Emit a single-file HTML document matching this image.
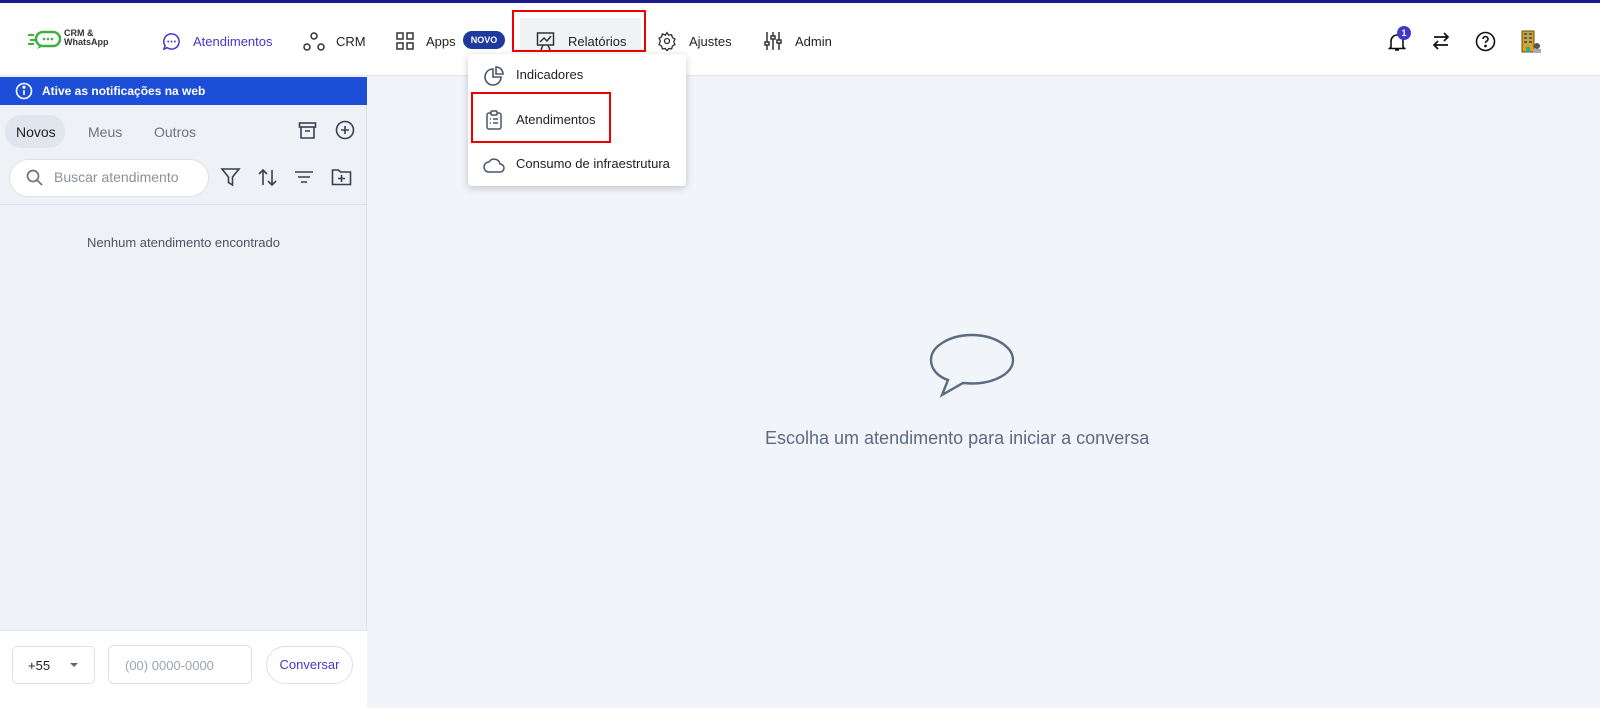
<!DOCTYPE html>
<html><head><meta charset="utf-8">
<style>
*{box-sizing:border-box;margin:0;padding:0}
body{width:1600px;height:708px;overflow:hidden;font-family:"Liberation Sans",sans-serif;background:#f1f4f9;position:relative;color:#1f2937}
.top{position:absolute;left:0;top:0;width:1600px;height:76px;background:#fff;border-top:3px solid #1e1b8f;border-bottom:1px solid #e3e6ea}
.abs{position:absolute}
.nav{position:absolute;top:31px;font-size:13px;color:#222}
svg{position:absolute}
.left{position:absolute;left:0;top:77px;width:367px;height:631px;background:#eef1f6;border-right:1px solid #dde1e7}
.banner{position:absolute;left:0;top:0;width:367px;height:28px;background:#1d4ed8;color:#fff;font-size:12px;font-weight:bold}
.menu{position:absolute;left:468px;top:54px;width:218px;height:132px;background:#fff;border-radius:4px;box-shadow:0 2px 8px rgba(0,0,0,.2)}
.mi{position:absolute;left:48px;font-size:13px;color:#222}
.red{position:absolute;border:2px solid #e00}
</style></head><body>
<div class="top">
  <svg style="left:28px;top:27px" width="36" height="20" viewBox="0 0 36 20"><rect x="8" y="2" width="24" height="14" rx="7" fill="none" stroke="#3cb043" stroke-width="2.5"/><path d="M12 15 L9 19 L16 16" fill="#3cb043"/><circle cx="16" cy="9" r="1.3" fill="#3cb043"/><circle cx="20" cy="9" r="1.3" fill="#3cb043"/><circle cx="24" cy="9" r="1.3" fill="#3cb043"/><rect x="0" y="4" width="6" height="2" fill="#3cb043"/><rect x="2" y="9" width="5" height="2" fill="#3cb043"/><rect x="0" y="13" width="6" height="2" fill="#3cb043"/></svg>
  <div class="abs" style="left:64px;top:26px;font-size:9px;line-height:9px;color:#333;font-weight:bold">CRM &amp;<br>WhatsApp</div>
  <svg style="left:162px;top:29px" width="19" height="19" viewBox="0 0 20 20"><path d="M10 2a8 8 0 1 1-4.5 14.6L2 18l1.2-3.6A8 8 0 0 1 10 2z" fill="none" stroke="#4338ca" stroke-width="1.6"/><circle cx="6.5" cy="10" r="1" fill="#4338ca"/><circle cx="10" cy="10" r="1" fill="#4338ca"/><circle cx="13.5" cy="10" r="1" fill="#4338ca"/></svg>
  <div class="nav" style="left:193px;color:#4338ca">Atendimentos</div>
  <svg style="left:303px;top:29px" width="22" height="20" viewBox="0 0 22 20"><circle cx="11" cy="4" r="3" fill="none" stroke="#333" stroke-width="1.5"/><circle cx="4" cy="15" r="3" fill="none" stroke="#333" stroke-width="1.5"/><circle cx="18" cy="15" r="3" fill="none" stroke="#333" stroke-width="1.5"/></svg>
  <div class="nav" style="left:336px">CRM</div>
  <svg style="left:396px;top:29px" width="18" height="18" viewBox="0 0 18 18" fill="none" stroke="#333" stroke-width="1.5"><rect x="1" y="1" width="6" height="6"/><rect x="11" y="1" width="6" height="6"/><rect x="1" y="11" width="6" height="6"/><rect x="11" y="11" width="6" height="6"/></svg>
  <div class="nav" style="left:426px">Apps</div>
  <div class="abs" style="left:463px;top:28px;width:42px;height:18px;border-radius:9px;background:#1e3a9f;color:#fff;font-size:9px;font-weight:bold;text-align:center;line-height:18px">NOVO</div>
  <div class="abs" style="left:520px;top:15px;width:121px;height:34px;background:#f1f2f4"></div>
  <svg style="left:536px;top:28px" width="19" height="20" viewBox="0 0 19 20" fill="none" stroke="#333" stroke-width="1.5"><rect x="1.5" y="2" width="16" height="12"/><path d="M4 11l4-4 3 3 4-5M7 14l-2 5M12 14l2 5"/></svg>
  <div class="nav" style="left:568px">Relatórios</div>
  <svg style="left:657px;top:28px" width="20" height="20" viewBox="0 0 24 24" fill="none" stroke="#333" stroke-width="1.6"><circle cx="12" cy="12" r="3"/><path d="M12 2l2 3 3.5-.5 1 3.4 3 1.8-1.4 3.3 1.4 3.3-3 1.8-1 3.4L14 21l-2 3-2-3-3.5.5-1-3.4-3-1.8L4 12 2.5 8.7l3-1.8 1-3.4L10 5z"/></svg>
  <div class="nav" style="left:689px">Ajustes</div>
  <svg style="left:764px;top:28px" width="18" height="20" viewBox="0 0 18 20" fill="none" stroke="#333" stroke-width="1.5"><path d="M3 1v18M9 1v18M15 1v18"/><rect x="1" y="11" width="4" height="3" fill="#fff"/><rect x="7" y="5" width="4" height="3" fill="#fff"/><rect x="13" y="9" width="4" height="3" fill="#fff"/></svg>
  <div class="nav" style="left:795px">Admin</div>
  <svg style="left:1388px;top:29px" width="18" height="20" viewBox="0 0 18 20" fill="none" stroke="#111" stroke-width="1.6"><path d="M3 15V9a6 6 0 0 1 12 0v6l1.5 1.5h-15zM7 18h4"/></svg>
  <div class="abs" style="left:1397px;top:23px;width:14px;height:14px;border-radius:7px;background:#4338ca;color:#fff;font-size:9px;font-weight:bold;text-align:center;line-height:14px">1</div>
  <svg style="left:1431px;top:28px" width="20" height="20" viewBox="0 0 20 20" fill="none" stroke="#111" stroke-width="1.7"><path d="M3 6h14M13 2l4 4-4 4M17 14H3M7 10l-4 4 4 4"/></svg>
  <svg style="left:1475px;top:28px" width="21" height="21" viewBox="0 0 21 21" fill="none" stroke="#111" stroke-width="1.6"><circle cx="10.5" cy="10.5" r="9"/><path d="M8 8a2.5 2.5 0 1 1 3.5 2.3c-.8.4-1 1-1 1.7"/><circle cx="10.5" cy="15" r=".6" fill="#111"/></svg>
  <svg style="left:1520px;top:27px" width="22" height="24" viewBox="0 0 22 24"><rect x="2" y="1" width="12" height="21" fill="#d9a520" stroke="#6b4e00"/><g fill="#3a5fa0"><rect x="4" y="3" width="3" height="2"/><rect x="9" y="3" width="3" height="2"/><rect x="4" y="7" width="3" height="2"/><rect x="9" y="7" width="3" height="2"/><rect x="4" y="11" width="3" height="2"/><rect x="9" y="11" width="3" height="2"/></g><rect x="6" y="17" width="4" height="5" fill="#3a9"/><circle cx="17" cy="16" r="3" fill="#556"/><rect x="13" y="19" width="8" height="4" fill="#aaa"/></svg>
</div>

<div class="left">
  <div class="banner">
    <svg style="left:15px;top:5px" width="18" height="18" viewBox="0 0 18 18" fill="none" stroke="#fff" stroke-width="1.6"><circle cx="9" cy="9" r="7.5"/><path d="M9 8v5"/><circle cx="9" cy="5.2" r=".8" fill="#fff"/></svg>
    <div class="abs" style="left:42px;top:7px">Ative as notificações na web</div>
  </div>
  <div class="abs" style="left:5px;top:38px;width:60px;height:33px;border-radius:16px;background:#e1e6ee"></div>
  <div class="abs" style="left:16px;top:47px;font-size:14px;color:#222">Novos</div>
  <div class="abs" style="left:88px;top:47px;font-size:14px;color:#6b7280">Meus</div>
  <div class="abs" style="left:154px;top:47px;font-size:14px;color:#6b7280">Outros</div>
  <svg style="left:298px;top:44px" width="19" height="19" viewBox="0 0 19 19" fill="none" stroke="#374151" stroke-width="1.6"><rect x="1.5" y="2" width="16" height="4"/><path d="M3 6v11h13V6M7 10h5"/></svg>
  <svg style="left:335px;top:43px" width="20" height="20" viewBox="0 0 20 20" fill="none" stroke="#374151" stroke-width="1.6"><circle cx="10" cy="10" r="8.5"/><path d="M10 6v8M6 10h8"/></svg>
  <div class="abs" style="left:9px;top:82px;width:200px;height:38px;border-radius:19px;background:#fff;border:1px solid #dde1e7"></div>
  <svg style="left:26px;top:92px" width="17" height="17" viewBox="0 0 17 17" fill="none" stroke="#6b7280" stroke-width="1.7"><circle cx="7" cy="7" r="5.5"/><path d="M11 11l5 5"/></svg>
  <div class="abs" style="left:54px;top:92px;font-size:14px;color:#8a919c">Buscar atendimento</div>
  <svg style="left:220px;top:90px" width="21" height="21" viewBox="0 0 21 21" fill="none" stroke="#374151" stroke-width="1.6"><path d="M2 2h17l-6.5 8v8l-4-2.5V10z"/></svg>
  <svg style="left:257px;top:90px" width="21" height="21" viewBox="0 0 21 21" fill="none" stroke="#374151" stroke-width="1.6"><path d="M6 18V3M2 7l4-4 4 4M15 3v15M11 14l4 4 4-4"/></svg>
  <svg style="left:294px;top:92px" width="20" height="16" viewBox="0 0 20 16" fill="none" stroke="#374151" stroke-width="1.6"><path d="M1 3h18M4 8h12M7 13h6"/></svg>
  <svg style="left:331px;top:90px" width="21" height="20" viewBox="0 0 21 20" fill="none" stroke="#374151" stroke-width="1.6"><path d="M1.5 3h6l2 2h10v12.5h-18zM10.5 8v7M7 11.5h7"/></svg>
  <div class="abs" style="left:0;top:127px;width:367px;height:1px;background:#dde1e7"></div>
  <div class="abs" style="left:0;top:158px;width:367px;text-align:center;font-size:13px;color:#4b5563">Nenhum atendimento encontrado</div>
  <div class="abs" style="left:0;top:553px;width:367px;height:78px;background:#fff;border-top:1px solid #e3e6ea">
    <div class="abs" style="left:12px;top:15px;width:83px;height:38px;border:1px solid #dde1e7;border-radius:5px"></div>
    <div class="abs" style="left:28px;top:27px;font-size:13px;color:#222">+55</div>
    <div class="abs" style="left:70px;top:32px;width:0;height:0;border-left:4px solid transparent;border-right:4px solid transparent;border-top:4px solid #666"></div>
    <div class="abs" style="left:108px;top:14px;width:144px;height:39px;border:1px solid #dde1e7;border-radius:6px"></div>
    <div class="abs" style="left:125px;top:27px;font-size:13px;color:#9ca3af">(00) 0000-0000</div>
    <div class="abs" style="left:266px;top:15px;width:87px;height:38px;border:1px solid #dde1e7;border-radius:19px;text-align:center;line-height:36px;font-size:13px;color:#4338ca">Conversar</div>
  </div>
</div>

<svg style="left:928px;top:333px" width="88" height="66" viewBox="0 0 88 66" fill="none" stroke="#5b6b80" stroke-width="2.4"><path d="M44 2C22 2 3 13 3 27c0 10 8 17 17 20l-6 15 21-12c3 0 6 .5 9 .5 22 0 41-10 41-23.5S66 2 44 2z"/></svg>
<div class="abs" style="left:765px;top:428px;font-size:18px;color:#5b6b80">Escolha um atendimento para iniciar a conversa</div>

<div class="menu">
  <svg style="left:16px;top:12px" width="20" height="20" viewBox="0 0 20 20" fill="none" stroke="#4b5563" stroke-width="1.6"><path d="M9 3a8 8 0 1 0 8 8H9z"/><path d="M12 1v7h7a7 7 0 0 0-7-7z"/></svg>
  <div class="mi" style="top:13px">Indicadores</div>
  <svg style="left:18px;top:56px" width="16" height="20" viewBox="0 0 16 20" fill="none" stroke="#4b5563" stroke-width="1.5"><rect x="1" y="3" width="14" height="16" rx="2"/><rect x="5" y="1" width="6" height="4" rx="1" fill="#fff"/><path d="M4 9h1M7 9h5M4 13h1M7 13h5"/></svg>
  <div class="mi" style="top:58px">Atendimentos</div>
  <svg style="left:15px;top:102px" width="22" height="17" viewBox="0 0 22 17" fill="none" stroke="#4b5563" stroke-width="1.5"><path d="M6 16h11a4 4 0 0 0 0-8 6 6 0 0 0-11-2 5 5 0 0 0 0 10z"/></svg>
  <div class="mi" style="top:102px">Consumo de infraestrutura</div>
</div>
<div class="red" style="left:512px;top:10px;width:134px;height:42px"></div>
<div class="red" style="left:471px;top:92px;width:140px;height:51px"></div>
</body></html>
